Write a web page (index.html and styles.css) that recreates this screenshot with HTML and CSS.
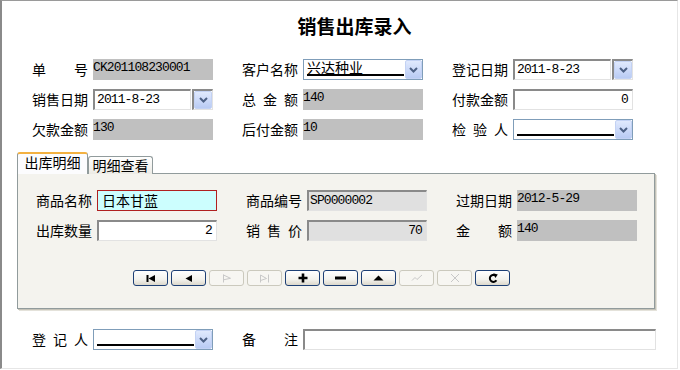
FILE: index.html
```html
<!DOCTYPE html>
<html lang="zh-CN">
<head>
<meta charset="utf-8">
<title>销售出库录入</title>
<link rel="stylesheet" href="styles.css">
</head>
<body>
<div class="window">
  <h1 class="title">销售出库录入</h1>

  <div class="grid form">
    <div class="cell"><span class="lbl">单号</span><div class="fld ro mono">CK201108230001</div></div>
    <div class="cell"><span class="lbl">客户名称</span>
      <div class="fld combo"><span class="combo-text"><span class="uline">兴达种业</span></span>
        <span class="drop"><svg width="9" height="6" viewBox="0 0 9 6"><path d="M1 1 L4.5 4.5 L8 1" fill="none" stroke="#4d6185" stroke-width="2"/></svg></span></div>
    </div>
    <div class="cell"><span class="lbl">登记日期</span>
      <div class="fld date"><span class="sunken date-text mono">2011-8-23</span>
        <span class="sunken date-btn"><span class="drop"><svg width="9" height="6" viewBox="0 0 9 6"><path d="M1 1 L4.5 4.5 L8 1" fill="none" stroke="#4d6185" stroke-width="2"/></svg></span></span></div>
    </div>

    <div class="cell"><span class="lbl">销售日期</span>
      <div class="fld date"><span class="sunken date-text mono">2011-8-23</span>
        <span class="sunken date-btn"><span class="drop"><svg width="9" height="6" viewBox="0 0 9 6"><path d="M1 1 L4.5 4.5 L8 1" fill="none" stroke="#4d6185" stroke-width="2"/></svg></span></span></div>
    </div>
    <div class="cell"><span class="lbl">总金额</span><div class="fld ro mono">140</div></div>
    <div class="cell"><span class="lbl">付款金额</span><div class="fld sunken num mono">0</div></div>

    <div class="cell"><span class="lbl">欠款金额</span><div class="fld ro mono">130</div></div>
    <div class="cell"><span class="lbl">后付金额</span><div class="fld ro mono">10</div></div>
    <div class="cell"><span class="lbl">检验人</span>
      <div class="fld combo"><span class="combo-text"><span class="uline"></span></span>
        <span class="drop"><svg width="9" height="6" viewBox="0 0 9 6"><path d="M1 1 L4.5 4.5 L8 1" fill="none" stroke="#4d6185" stroke-width="2"/></svg></span></div>
    </div>
  </div>

  <div class="tabs">
    <div class="tab on">出库明细</div>
    <div class="tab off">明细查看</div>
  </div>
  <div class="panel">
    <div class="grid">
      <div class="cell"><span class="lbl">商品名称</span><div class="fld cyan">日本甘蓝</div></div>
      <div class="cell"><span class="lbl">商品编号</span><div class="fld sunken lt mono txt">SP0000002</div></div>
      <div class="cell"><span class="lbl">过期日期</span><div class="fld ro mono">2012-5-29</div></div>

      <div class="cell"><span class="lbl">出库数量</span><div class="fld sunken num mono">2</div></div>
      <div class="cell"><span class="lbl">销售价</span><div class="fld sunken lt num mono">70</div></div>
      <div class="cell"><span class="lbl">金额</span><div class="fld ro mono">140</div></div>
    </div>

    <div class="bar">
      <span class="btn"><svg width="10" height="9" viewBox="0 0 10 9"><rect x="0.5" y="1" width="2" height="7"/><path d="M2.5 4.5 L9 1 V8 Z"/></svg></span>
      <span class="btn"><svg width="8" height="9" viewBox="0 0 8 9"><path d="M0.5 4.5 L7 1 V8 Z"/></svg></span>
      <span class="btn dis"><svg width="10" height="9" viewBox="0 0 10 9"><path d="M1.5 0.5 V8.5 M1.5 1 L8.5 4.3 L1.5 5.8" fill="none" stroke="#c8c8c8"/></svg></span>
      <span class="btn dis"><svg width="11" height="9" viewBox="0 0 11 9"><path d="M1.5 8.5 V1 L7.5 4.5 L1.5 6.5 M9.5 0.5 V8.5" fill="none" stroke="#c8c8c8"/></svg></span>
      <span class="btn"><svg width="10" height="10" viewBox="0 0 10 10"><path d="M5 0.5 V9.5 M0.5 5 H9.5" stroke="#000" stroke-width="2.6"/></svg></span>
      <span class="btn"><svg width="11" height="4" viewBox="0 0 11 4"><rect x="0" y="0.5" width="11" height="3"/></svg></span>
      <span class="btn"><svg width="11" height="6" viewBox="0 0 11 6"><path d="M0.5 5.5 L5.5 0.5 L10.5 5.5 Z"/></svg></span>
      <span class="btn dis"><svg width="12" height="8" viewBox="0 0 12 8"><path d="M1 6.5 L4 3.5 L6 5.5 L11 1" fill="none" stroke="#c8c8c8"/></svg></span>
      <span class="btn dis"><svg width="10" height="10" viewBox="0 0 10 10"><path d="M1 1 L9 9 M9 1 L1 9" fill="none" stroke="#c8c8c8"/></svg></span>
      <span class="btn"><svg width="10" height="10" viewBox="0 0 10 10"><path d="M7.2 2.4 A3.5 3.5 0 1 0 8.4 7.2" fill="none" stroke="#000" stroke-width="2"/><path d="M5.2 0.2 L9.8 1.4 L7.4 5 Z"/></svg></span>
    </div>
  </div>

  <div class="bottom">
    <div class="cell"><span class="lbl">登记人</span>
      <div class="fld combo"><span class="combo-text"><span class="uline"></span></span>
        <span class="drop"><svg width="9" height="6" viewBox="0 0 9 6"><path d="M1 1 L4.5 4.5 L8 1" fill="none" stroke="#4d6185" stroke-width="2"/></svg></span></div>
    </div>
    <div class="cell"><span class="lbl">备注</span><div class="sunken memo"></div></div>
  </div>
</div>
</body>
</html>
```

FILE: styles.css
```css
* { box-sizing: border-box; }

body {
  margin: 0;
  font-family: "Noto Sans CJK SC", "Noto Sans", sans-serif;
  font-size: 14px;
  color: #000;
  background: #fff;
}

.window {
  width: 678px;
  height: 369px;
  background: #fff;
  border-left: 2px solid #8a8a8a;
  border-top: 1px solid #9a9a9a;
  border-right: 1px solid #e6e6e6;
  border-bottom: 1px solid #e6e6e6;
}

.title {
  margin: 0;
  height: 58px;
  padding: 14px 0 0 30px;
  text-align: center;
  font-size: 19px;
  line-height: 22px;
  font-weight: bold;
}

.grid {
  display: grid;
  grid-template-columns: repeat(3, 181px);
  grid-auto-rows: 21px;
  column-gap: 29px;
  row-gap: 9px;
}

.form { padding-left: 30px; }

.cell {
  display: flex;
  align-items: center;
  gap: 5px;
}

.lbl {
  width: 56px;
  flex: none;
  line-height: 21px;
  text-align: justify;
  text-align-last: justify;
}

.fld {
  width: 120px;
  height: 21px;
  flex: none;
}

.mono {
  font-family: "Liberation Mono", "DejaVu Sans Mono", monospace;
  font-size: 13px;
  letter-spacing: -0.9px;
}

.ro {
  background: #c0c0c0;
  padding-top: 1px;
  line-height: 15px;
}

.sunken {
  border-style: solid;
  border-width: 2px 1px 1px 2px;
  border-color: #8a8a8a #e2e2e2 #e2e2e2 #8a8a8a;
  background: #fff;
}

.lt { background: #e0e0e0; }

.num {
  text-align: right;
  padding-right: 4px;
  line-height: 18px;
}

.txt {
  padding-left: 1px;
  line-height: 17px;
}

.combo {
  display: flex;
  border: 1px solid #7f9db9;
  background: #fff;
}

.combo-text {
  flex: 1;
  padding: 0 1px 0 3px;
}

.uline {
  display: block;
  height: 16px;
  line-height: 15px;
  border-bottom: 2px solid #000;
}

.drop {
  width: 17px;
  flex: none;
  display: flex;
  align-items: center;
  justify-content: center;
  background: linear-gradient(#e0e9fd, #b9cbf4);
  border: 1px solid #c3d2f4;
  border-radius: 2px;
}

.date {
  display: flex;
  gap: 1px;
}

.date-text {
  width: 98px;
  padding-left: 2px;
  line-height: 18px;
}

.date-btn {
  flex: 1;
  display: flex;
}

.date-btn .drop { flex: 1; }

.tabs {
  display: flex;
  align-items: flex-end;
  height: 22px;
  margin: 12px 0 -1px 15px;
  position: relative;
  z-index: 1;
}

.tab {
  border: 1px solid #919b9c;
  border-bottom: none;
  border-radius: 3px 3px 0 0;
  text-align: center;
}

.tab.on {
  width: 71px;
  height: 22px;
  border-top: 2px solid #f3b141;
  background: #fcfcfe;
  line-height: 16px;
}

.tab.off {
  width: 65px;
  height: 18px;
  background: linear-gradient(#ffffff, #ecebe5);
  line-height: 16px;
}

.panel {
  margin-left: 15px;
  width: 638px;
  height: 136px;
  border: 1px solid #919b9c;
  background: #f4f3ee;
  box-shadow: 1px 1px 0 #c4c2b8, 2px 2px 0 #e4e2da;
  padding: 16px 0 0 18px;
}

.cyan {
  border: 1px solid #b02020;
  background: #ccfefe;
  padding-left: 4px;
  line-height: 19px;
}

.bar {
  display: flex;
  gap: 3px;
  margin: 29px 0 0 97px;
}

.btn {
  width: 35px;
  height: 16px;
  display: flex;
  align-items: center;
  justify-content: center;
  border: 1px solid #1d3f75;
  border-radius: 3px;
  background: linear-gradient(#ffffff, #f3f2ed 60%, #dcd8cc);
}

.btn.dis {
  border-color: #cbc9bd;
  background: #f7f6f2;
}

.bottom {
  display: grid;
  grid-template-columns: 181px 414px;
  grid-auto-rows: 21px;
  column-gap: 29px;
  margin-top: 20px;
  padding-left: 30px;
}

.memo {
  flex: 1;
  height: 21px;
}
```
